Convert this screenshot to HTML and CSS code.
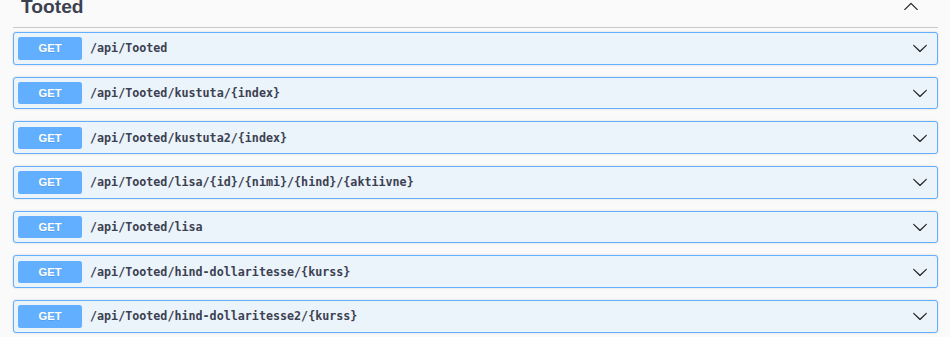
FILE: index.html
```html
<!DOCTYPE html>
<html lang="en">
<head>
  <meta charset="UTF-8">
  <meta name="viewport" content="width=device-width, initial-scale=1.0">
  <title>Tooted</title>
  <link rel="stylesheet" href="styles.css">
</head>
<body>
  <section class="tag-section">
    <h3 class="tag-heading">
      <span class="tag-name">Tooted</span>
      <button class="expand-btn" aria-label="Collapse">
        <svg width="16" height="16" viewBox="0 0 20 20"><path d="M17.418 14.908c.272.268.709.268.979 0s.271-.701 0-.969l-7.908-7.83c-.27-.268-.707-.268-.979 0l-7.908 7.83c-.27.268-.27.701 0 .969.271.268.709.268.979 0L10 7.767l7.418 7.141z"/></svg>
      </button>
    </h3>

    <div class="operations">
      <div class="opblock">
        <span class="method">GET</span>
        <span class="path">/api/Tooted</span>
        <svg class="arrow" width="16" height="16" viewBox="0 0 20 20"><path d="M17.418 6.109c.272-.268.709-.268.979 0s.271.701 0 .969l-7.908 7.83c-.27.268-.707.268-.979 0l-7.908-7.83c-.27-.268-.27-.701 0-.969.271-.268.709-.268.979 0L10 13.25l7.418-7.141z"/></svg>
      </div>
      <div class="opblock">
        <span class="method">GET</span>
        <span class="path">/api/Tooted/kustuta/{index}</span>
        <svg class="arrow" width="16" height="16" viewBox="0 0 20 20"><path d="M17.418 6.109c.272-.268.709-.268.979 0s.271.701 0 .969l-7.908 7.83c-.27.268-.707.268-.979 0l-7.908-7.83c-.27-.268-.27-.701 0-.969.271-.268.709-.268.979 0L10 13.25l7.418-7.141z"/></svg>
      </div>
      <div class="opblock">
        <span class="method">GET</span>
        <span class="path">/api/Tooted/kustuta2/{index}</span>
        <svg class="arrow" width="16" height="16" viewBox="0 0 20 20"><path d="M17.418 6.109c.272-.268.709-.268.979 0s.271.701 0 .969l-7.908 7.83c-.27.268-.707.268-.979 0l-7.908-7.83c-.27-.268-.27-.701 0-.969.271-.268.709-.268.979 0L10 13.25l7.418-7.141z"/></svg>
      </div>
      <div class="opblock">
        <span class="method">GET</span>
        <span class="path">/api/Tooted/lisa/{id}/{nimi}/{hind}/{aktiivne}</span>
        <svg class="arrow" width="16" height="16" viewBox="0 0 20 20"><path d="M17.418 6.109c.272-.268.709-.268.979 0s.271.701 0 .969l-7.908 7.83c-.27.268-.707.268-.979 0l-7.908-7.83c-.27-.268-.27-.701 0-.969.271-.268.709-.268.979 0L10 13.25l7.418-7.141z"/></svg>
      </div>
      <div class="opblock">
        <span class="method">GET</span>
        <span class="path">/api/Tooted/lisa</span>
        <svg class="arrow" width="16" height="16" viewBox="0 0 20 20"><path d="M17.418 6.109c.272-.268.709-.268.979 0s.271.701 0 .969l-7.908 7.83c-.27.268-.707.268-.979 0l-7.908-7.83c-.27-.268-.27-.701 0-.969.271-.268.709-.268.979 0L10 13.25l7.418-7.141z"/></svg>
      </div>
      <div class="opblock">
        <span class="method">GET</span>
        <span class="path">/api/Tooted/hind-dollaritesse/{kurss}</span>
        <svg class="arrow" width="16" height="16" viewBox="0 0 20 20"><path d="M17.418 6.109c.272-.268.709-.268.979 0s.271.701 0 .969l-7.908 7.83c-.27.268-.707.268-.979 0l-7.908-7.83c-.27-.268-.27-.701 0-.969.271-.268.709-.268.979 0L10 13.25l7.418-7.141z"/></svg>
      </div>
      <div class="opblock">
        <span class="method">GET</span>
        <span class="path">/api/Tooted/hind-dollaritesse2/{kurss}</span>
        <svg class="arrow" width="16" height="16" viewBox="0 0 20 20"><path d="M17.418 6.109c.272-.268.709-.268.979 0s.271.701 0 .969l-7.908 7.83c-.27.268-.707.268-.979 0l-7.908-7.83c-.27-.268-.27-.701 0-.969.271-.268.709-.268.979 0L10 13.25l7.418-7.141z"/></svg>
      </div>
    </div>
  </section>
</body>
</html>
```

FILE: styles.css
```css
body {
  margin: 0;
  padding: 0;
  background-color: #fafafa;
  font-family: "Liberation Sans", Arial, sans-serif;
  color: #3b4151;
  overflow: hidden;
}

/* Tag section, page is scrolled a little */
.tag-section {
  margin: -13px 12px 0 13px;
}

.tag-heading {
  display: flex;
  align-items: center;
  margin: 0;
  padding: 8px 19px 8px 8px;
  height: 24px;
  border-bottom: 1px solid #c8c9cc;
  font-size: 19.2px;
  font-weight: bold;
  line-height: 24px;
  color: #3b4151;
}

.tag-name {
  flex: 1;
}

.expand-btn {
  display: flex;
  align-items: center;
  background: none;
  border: none;
  padding: 0;
  margin-top: -2px;
  cursor: pointer;
}

.expand-btn svg {
  fill: #222;
}

.operations {
  padding-top: 4px;
}

.opblock {
  display: flex;
  align-items: center;
  margin-bottom: 12px;
  padding: 4px;
  height: 22.7px;
  background-color: #ebf3fb;
  border: 1px solid #61affe;
  border-radius: 3px;
  box-shadow: 0 0 2px rgba(0, 0, 0, 0.19);
}

.method {
  width: 64px;
  height: 22.4px;
  line-height: 22.4px;
  text-align: center;
  background-color: #61affe;
  color: white;
  font-size: 11.2px;
  font-weight: bold;
  border-radius: 2.5px;
  text-shadow: 0 1px 0 rgba(0, 0, 0, 0.1);
}

.path {
  flex: 1;
  padding: 0 8px;
  font-family: "DejaVu Sans Mono", "Liberation Mono", monospace;
  font-size: 11.7px;
  font-weight: bold;
  color: #3b4151;
}

.arrow {
  fill: #222;
  margin-right: 5px;
}
```
